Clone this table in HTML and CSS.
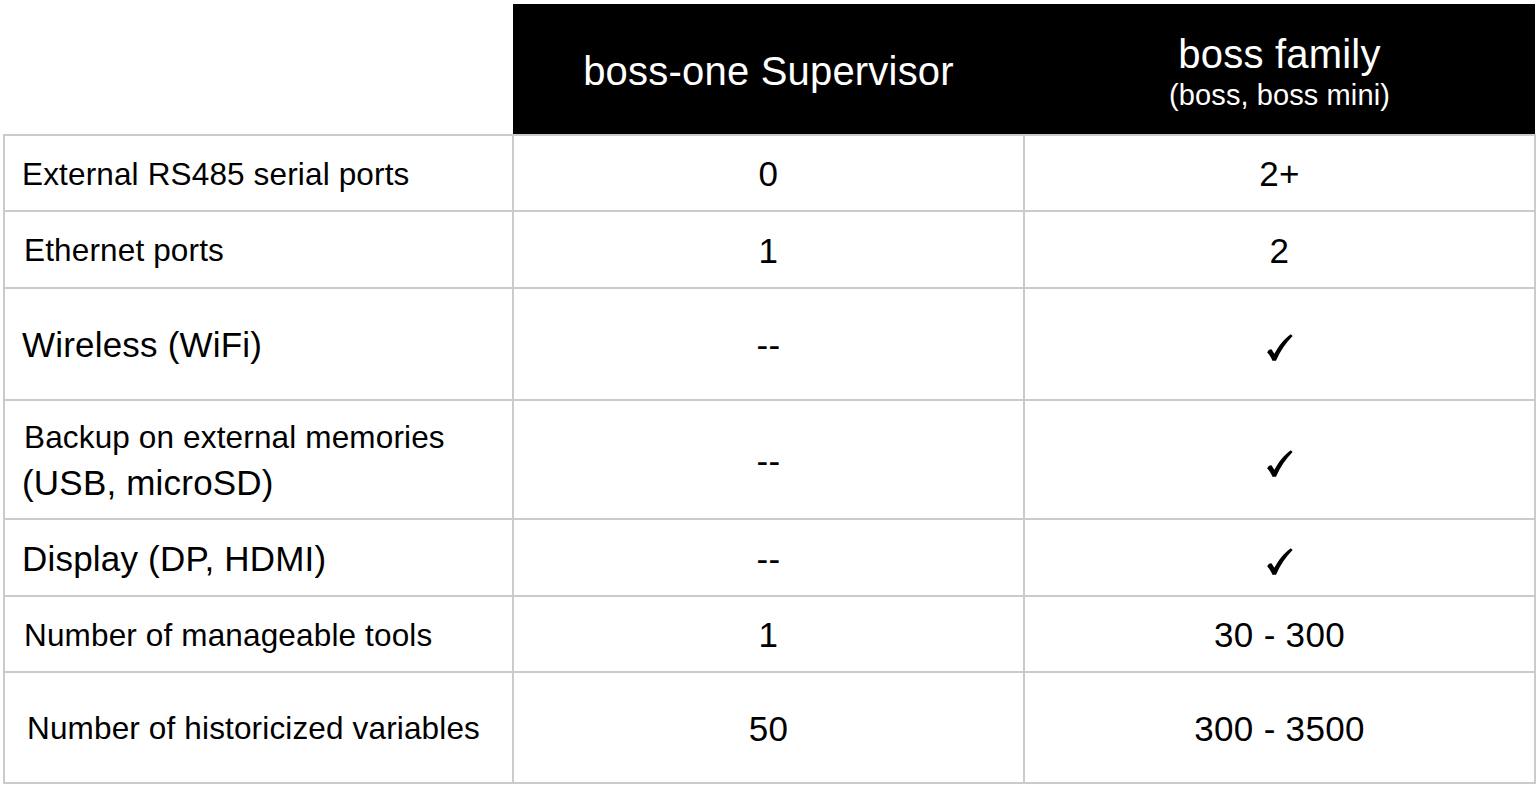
FILE: index.html
```html
<!DOCTYPE html>
<html lang="en">
<head>
<meta charset="utf-8">
<title>boss-one Supervisor vs boss family</title>
<link rel="stylesheet" href="styles.css">
</head>
<body>
<table class="cmp">
  <colgroup>
    <col class="col-label">
    <col class="col-one">
    <col class="col-fam">
  </colgroup>
  <thead>
    <tr class="row-head">
      <th class="corner"></th>
      <th class="head"><span class="h-main h-one">boss-one Supervisor</span></th>
      <th class="head head-fam"><span class="h-main h-fam">boss family</span><span class="h-sub">(boss, boss mini)</span></th>
    </tr>
  </thead>
  <tbody>
    <tr class="r1">
      <td class="label sm">External RS485 serial ports</td>
      <td class="val">0</td>
      <td class="val">2+</td>
    </tr>
    <tr class="r2">
      <td class="label sm ind2">Ethernet ports</td>
      <td class="val">1</td>
      <td class="val">2</td>
    </tr>
    <tr class="r3">
      <td class="label lg">Wireless (WiFi)</td>
      <td class="val">--</td>
      <td class="val"><svg class="check" viewBox="0 0 26 27" width="26" height="27" aria-label="yes"><path d="M0.2,18.4 C1.2,16.2 2.8,15.0 4.4,15.2 L7.4,19.8 C11.2,12.6 16.6,5.2 23.8,0.2 L25.6,2.0 C19.2,8.4 13.4,16.8 9.0,26.8 L5.4,26.8 C4.2,23.4 2.4,20.2 0.2,18.4 Z"/></svg></td>
    </tr>
    <tr class="r4">
      <td class="label multi ind2"><span class="ln sm-line">Backup on external memories</span><span class="ln lg-line">(USB, microSD)</span></td>
      <td class="val">--</td>
      <td class="val"><svg class="check" viewBox="0 0 26 27" width="26" height="27" aria-label="yes"><path d="M0.2,18.4 C1.2,16.2 2.8,15.0 4.4,15.2 L7.4,19.8 C11.2,12.6 16.6,5.2 23.8,0.2 L25.6,2.0 C19.2,8.4 13.4,16.8 9.0,26.8 L5.4,26.8 C4.2,23.4 2.4,20.2 0.2,18.4 Z"/></svg></td>
    </tr>
    <tr class="r5">
      <td class="label lg">Display (DP, HDMI)</td>
      <td class="val">--</td>
      <td class="val"><svg class="check" viewBox="0 0 26 27" width="26" height="27" aria-label="yes"><path d="M0.2,18.4 C1.2,16.2 2.8,15.0 4.4,15.2 L7.4,19.8 C11.2,12.6 16.6,5.2 23.8,0.2 L25.6,2.0 C19.2,8.4 13.4,16.8 9.0,26.8 L5.4,26.8 C4.2,23.4 2.4,20.2 0.2,18.4 Z"/></svg></td>
    </tr>
    <tr class="r6">
      <td class="label sm ind2">Number of manageable tools</td>
      <td class="val">1</td>
      <td class="val">30 - 300</td>
    </tr>
    <tr class="r7">
      <td class="label sm ind3">Number of historicized variables</td>
      <td class="val">50</td>
      <td class="val">300 - 3500</td>
    </tr>
  </tbody>
</table>
</body>
</html>
```

FILE: styles.css
```css
html, body {
  margin: 0;
  padding: 0;
  background: #ffffff;
}

body {
  font-family: "Liberation Sans", Arial, sans-serif;
  color: #000000;
}

.cmp {
  border-collapse: collapse;
  table-layout: fixed;
  width: 1531px;
  margin: 4px 0 0 3px;
}

.col-label { width: 509px; }
.col-one { width: 511px; }
.col-fam { width: 511px; }

/* header */
.row-head { height: 131px; }

.corner {
  background: #ffffff;
  border: none;
  padding: 0;
}

.head {
  background: #000000;
  color: #ffffff;
  font-weight: normal;
  text-align: center;
  vertical-align: middle;
  padding: 0;
  border: none;
}

.head-fam {
  vertical-align: top;
  padding-top: 31px;
}

.h-one {
  display: block;
  font-size: 40px;
  letter-spacing: 0.2px;
  line-height: 40px;
  padding-top: 3px;
}

.h-fam {
  display: block;
  font-size: 40px;
  letter-spacing: 0.2px;
  line-height: 38px;
}

.h-sub {
  display: block;
  font-size: 29px;
  letter-spacing: 0.1px;
  line-height: 38px;
  padding-top: 3px;
}

/* body cells */
tbody td {
  border: 2px solid #cbcbcb;
  padding: 0;
  vertical-align: middle;
}

.r1 { height: 76px; }
.r2 { height: 77px; }
.r3 { height: 112px; }
.r4 { height: 119px; }
.r5 { height: 77px; }
.r6 { height: 76px; }
.r7 { height: 111px; }

.label {
  text-align: left;
  padding-left: 17px;
}

.label.ind2 { padding-left: 19px; }
.label.ind3 { padding-left: 22px; }

.sm {
  font-size: 31.5px;
  letter-spacing: 0.15px;
  padding-top: 2px;
}

.lg {
  font-size: 35px;
  letter-spacing: 0.2px;
  padding-top: 2px;
}

.multi {
  padding-top: 2px;
}

.multi .ln {
  display: block;
}

.multi .sm-line {
  font-size: 31.5px;
  letter-spacing: 0.15px;
  line-height: 44px;
}

.multi .lg-line {
  font-size: 35px;
  letter-spacing: 0.2px;
  margin-left: -2px;
  line-height: 47px;
}

.val {
  text-align: center;
  font-size: 35px;
  letter-spacing: 0.3px;
  padding-top: 2px;
}

.check {
  display: inline-block;
  vertical-align: middle;
  fill: #000000;
}
```
